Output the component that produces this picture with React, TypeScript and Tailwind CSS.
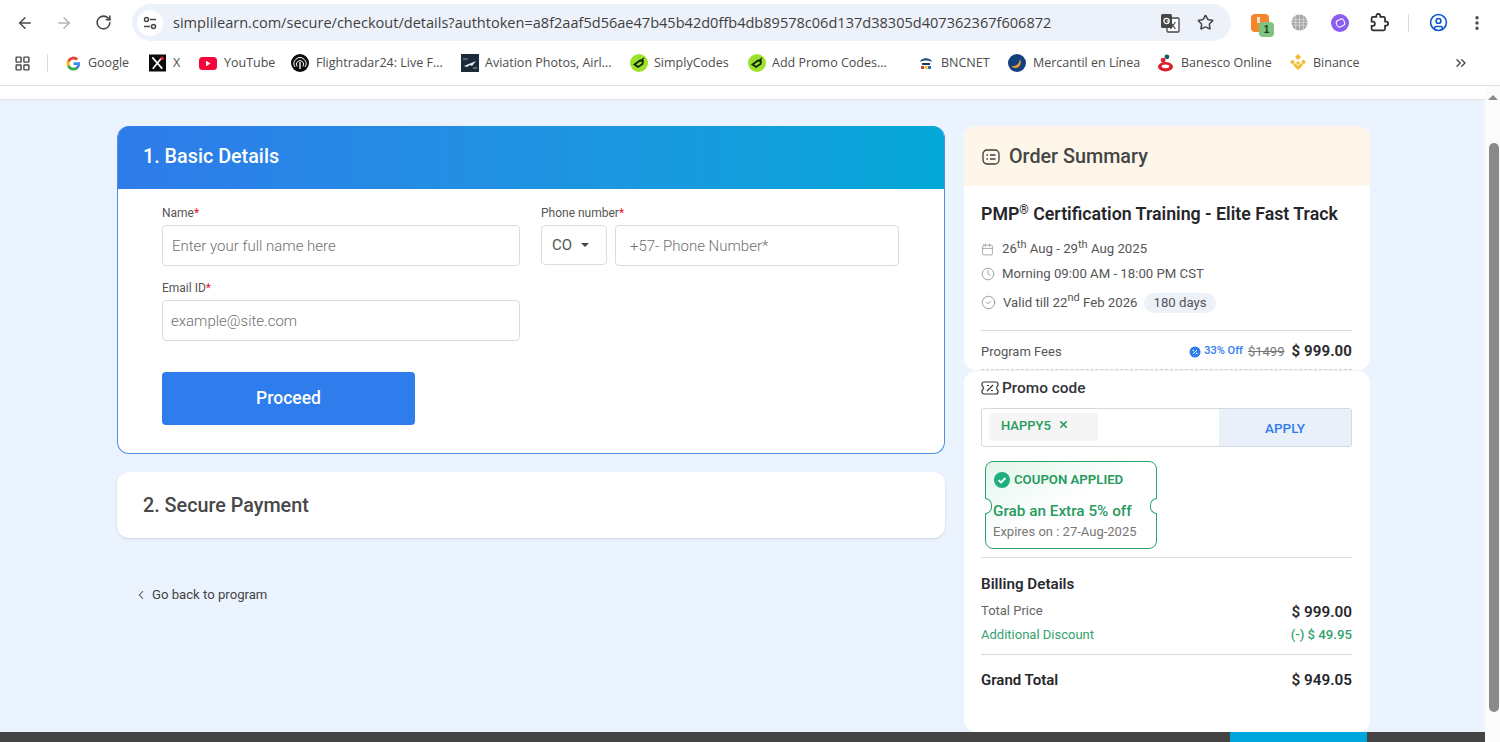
import type { ReactNode } from "react";
import {
  ArrowLeft,
  ArrowRight,
  Calendar,
  ChevronLeft,
  ChevronsRight,
  CircleCheck,
  CircleUser,
  Clock,
  EllipsisVertical,
  LayoutGrid,
  RotateCw,
  Star,
  X,
} from "lucide-react";

function GoogleIcon() {
  return (
    <svg viewBox="0 0 24 24" className="h-[15px] w-[15px]">
      <path fill="#4285F4" d="M22.6 12.2c0-.8-.1-1.500-.2-2.200H12v4.300h5.900a5 5 0 0 1-2.200 3.300v2.700h3.600c2.100-1.900 3.300-4.800 3.300-8.100z" />
      <path fill="#34A853" d="M12 23c3 0 5.500-1 7.300-2.700l-3.600-2.700c-1 .7-2.200 1.100-3.700 1.100-2.900 0-5.300-1.900-6.200-4.500H2.100v2.800A11 11 0 0 0 12 23z" />
      <path fill="#FBBC05" d="M5.800 14.200a6.600 6.600 0 0 1 0-4.300V7.100H2.100a11 11 0 0 0 0 9.900z" />
      <path fill="#EA4335" d="M12 5.400c1.600 0 3.100.6 4.200 1.600l3.200-3.200A11 11 0 0 0 2.100 7.100l3.700 2.800C6.700 7.300 9.100 5.400 12 5.400z" />
    </svg>
  );
}

function XIcon() {
  return (
    <svg viewBox="0 0 18 18" className="h-[18px] w-[17px]">
      <rect width="18" height="18" fill="#0b0b0b" />
      <path d="M3.500 3 14 15M13.500 3.500 4 15" stroke="#fff" strokeWidth="1.800" />
      <circle cx="14" cy="4" r="1.800" fill="#e5202e" />
    </svg>
  );
}

function YouTubeIcon() {
  return (
    <svg viewBox="0 0 18 13" className="h-[13px] w-[18px]">
      <rect width="18" height="13" rx="3.500" fill="#f5063a" />
      <path d="M7 3.800v5.400l4.500-2.700z" fill="#fff" />
    </svg>
  );
}

function RadarIcon() {
  return (
    <svg viewBox="0 0 18 18" className="h-[18px] w-[18px]">
      <circle cx="9" cy="9" r="9" fill="#0c0c0c" />
      <path d="M4 13a6 6 0 1 1 10 0M6.200 12.500a3.600 3.600 0 1 1 5.600 0" fill="none" stroke="#fff" strokeWidth="1" />
      <path d="M9 8v7" stroke="#fff" strokeWidth="1.400" />
    </svg>
  );
}

function AviationIcon() {
  return (
    <svg viewBox="0 0 18 18" className="h-[18px] w-[18px]">
      <rect width="18" height="18" fill="#1d2a3a" />
      <path d="M3 12 15 7l-4 5-2-1-3 2z" fill="#e8edf2" />
      <path d="M2 5h5M12 14h4" stroke="#8fa0b2" strokeWidth="1" />
    </svg>
  );
}

function CodesIcon() {
  return (
    <svg viewBox="0 0 18 18" className="h-[18px] w-[18px]">
      <circle cx="9" cy="9" r="9" fill="#9be22d" />
      <path d="M4.500 10.500 10 6.500l3 .5-.5 3-4.500 3z" fill="none" stroke="#10240a" strokeWidth="1.800" />
      <path d="M11 6.500 14 4" stroke="#10240a" strokeWidth="1.300" />
    </svg>
  );
}

function BncIcon() {
  return (
    <svg viewBox="0 0 14 14" className="h-[14px] w-[14px]">
      <path d="M1 6c1-5 11-5 12 0-3-2-9-2-12 0z" fill="#1d4f7c" />
      <rect x="3" y="7" width="8" height="2" fill="#173a5c" />
      <rect x="2" y="10" width="3" height="3" fill="#d2403a" />
      <rect x="5.500" y="10" width="3" height="3" fill="#e9c548" />
      <rect x="9" y="10" width="3" height="3" fill="#2d6fb5" />
    </svg>
  );
}

function MercantilIcon() {
  return (
    <svg viewBox="0 0 18 18" className="h-[18px] w-[18px]">
      <circle cx="9" cy="9" r="9" fill="#123f7d" />
      <path d="M3 12c4 1 8-1 9-7 2 4 0 9-5 9-2 0-3-1-4-2z" fill="#ef9a2d" />
    </svg>
  );
}

function BanescoIcon() {
  return (
    <svg viewBox="0 0 18 18" className="h-[18px] w-[17px]">
      <ellipse cx="9" cy="13" rx="8" ry="5" fill="#dc1f2e" />
      <ellipse cx="9" cy="12.500" rx="4" ry="2" fill="#fff" />
      <circle cx="6.500" cy="6" r="2.500" fill="#dc1f2e" />
      <circle cx="10.500" cy="2.500" r="2.500" fill="#14575c" />
    </svg>
  );
}

function BinanceIcon() {
  return (
    <svg viewBox="0 0 18 18" className="h-[18px] w-[18px]">
      <path
        fill="#f3ba2f"
        d="M9 0l3 3-3 3-3-3zM3.500 5.500l2.500 2.500-2.500 2.500L1 8zM14.500 5.500L17 8l-2.500 2.500L12 8zM9 7l2 2-2 2-2-2zM9 12l3-3 2 2-5 5-5-5 2-2z"
      />
    </svg>
  );
}

function TranslateIcon() {
  return (
    <svg viewBox="0 0 20 20" className="ml-auto h-[20px] w-[20px]">
      <rect x="7" y="5" width="12" height="14" rx="1" fill="#fff" stroke="#474747" strokeWidth="1.300" />
      <path d="M10.500 9l5 7M15.500 9l-5 7" stroke="#474747" strokeWidth="1.200" />
      <rect x="1" y="1" width="11" height="14" rx="1.500" fill="#474747" />
      <circle cx="6.500" cy="8" r="2.600" fill="none" stroke="#fff" strokeWidth="1.200" />
      <path d="M6.500 8h2.800" stroke="#fff" strokeWidth="1.100" />
    </svg>
  );
}

function GlobeIcon() {
  return (
    <svg viewBox="0 0 18 18" className="ml-[22px] h-[17px] w-[17px]">
      <circle cx="9" cy="9" r="8.500" fill="#a6a6a6" />
      <path d="M1 6h16M1 9h16M1 12h16M5 1.500v15M9 .5v17M13 1.500v15" stroke="#e2e2e2" strokeWidth="0.700" />
    </svg>
  );
}

function PuzzleIcon() {
  return (
    <svg viewBox="0 0 24 24" className="ml-[21px] h-[19px] w-[19px]" fill="none" stroke="#2f2f2f" strokeWidth="2.200" strokeLinejoin="round">
      <path d="M20.500 11H19V7c0-1.100-.9-2-2-2h-4V3.500C13 2.120 11.880 1 10.500 1S8 2.120 8 3.500V5H4c-1.100 0-2 .9-2 2v3.800h1.500c1.490 0 2.700 1.210 2.700 2.700s-1.210 2.700-2.700 2.700H2V20c0 1.100.9 2 2 2h13c1.100 0 2-.9 2-2v-4h1.500c1.380 0 2.500-1.120 2.500-2.500S21.880 11 20.500 11z" />
    </svg>
  );
}

function PromoIcon() {
  return (
    <svg viewBox="0 0 18 16" className="h-[16px] w-[18px]" fill="none" stroke="#333" strokeWidth="1.200">
      <path d="M3 2h12a2 2 0 0 1 2 2v1.500a3 3 0 0 0 0 5V12a2 2 0 0 1-2 2H3a2 2 0 0 1-2-2v-1.500a3 3 0 0 0 0-5V4a2 2 0 0 1 2-2z" />
      <path d="M6 11l6-6M6 5.500h2M10 10.500h2" />
    </svg>
  );
}

const bookmarks: { label: string; width: string; icon: ReactNode; gap: string }[] = [
  { label: "Google", width: "w-[83px]", icon: <GoogleIcon />, gap: "gap-[7px]" },
  { label: "X", width: "w-[50px]", icon: <XIcon />, gap: "gap-[7px]" },
  { label: "YouTube", width: "w-[92px]", icon: <YouTubeIcon />, gap: "gap-[7px]" },
  { label: "Flightradar24: Live F...", width: "w-[170px]", icon: <RadarIcon />, gap: "gap-[7px]" },
  { label: "Aviation Photos, Airl...", width: "w-[169px]", icon: <AviationIcon />, gap: "gap-[6px]" },
  { label: "SimplyCodes", width: "w-[118px]", icon: <CodesIcon />, gap: "gap-[6px]" },
  { label: "Add Promo Codes...", width: "w-[171px]", icon: <CodesIcon />, gap: "gap-[6px]" },
  { label: "BNCNET", width: "w-[89px]", icon: <BncIcon />, gap: "gap-[8px]" },
  { label: "Mercantil en Línea", width: "w-[149px]", icon: <MercantilIcon />, gap: "gap-[7px]" },
  { label: "Banesco Online", width: "w-[132px]", icon: <BanescoIcon />, gap: "gap-[7px]" },
  { label: "Binance", width: "w-[85px]", icon: <BinanceIcon />, gap: "gap-[6px]" },
];

function Toolbar() {
  return (
    <div className="flex h-[45px] items-center bg-white text-[#474747]">
      <ArrowLeft className="ml-[16px] h-[18px] w-[18px]" strokeWidth={2} />
      <ArrowRight className="ml-[21px] h-[18px] w-[18px] text-[#b4b4b4]" strokeWidth={2} />
      <RotateCw className="ml-[22px] h-[17px] w-[17px]" strokeWidth={2.2} />
      <div className="ml-[20px] flex h-[37px] w-[1099px] items-center rounded-full bg-[#edf2fa] pl-[5px]">
        <div className="flex h-[26px] w-[26px] items-center justify-center rounded-full bg-white">
          <svg viewBox="0 0 16 16" className="h-[16px] w-[16px]" fill="none" stroke="#474747" strokeWidth="1.500">
            <circle cx="4.500" cy="4.500" r="2" />
            <path d="M8 4.500h6M2 11.500h6" />
            <circle cx="11.500" cy="11.500" r="2" />
          </svg>
        </div>
        <span className="ml-[10px] font-['Open_Sans',sans-serif] text-[14.560px] text-[#3f3f3f]">
          simplilearn.com/secure/checkout/details?authtoken=a8f2aaf5d56ae47b45b42d0ffb4db89578c06d137d38305d407362367f606872
        </span>
        <TranslateIcon />
        <Star className="ml-[17px] mr-[17px] h-[17px] w-[17px]" strokeWidth={2.2} />
      </div>
      <div className="relative ml-[20px] flex h-[18px] w-[18px] items-center justify-center rounded-[4px] bg-[#f5862c]">
        <span className="mb-[5px] mr-[3px] h-[6px] w-[3px] bg-[#fde3c8]" />
        <span className="absolute left-[8px] top-[8px] flex h-[15px] w-[15px] items-center justify-center rounded-[4px] bg-[#7cc47f] font-['Liberation_Sans',sans-serif] text-[10px] font-bold text-[#1d3b20]">
          1
        </span>
      </div>
      <GlobeIcon />
      <div className="ml-[23px] flex h-[18px] w-[18px] items-center justify-center rounded-full bg-[#8b5cf0]">
        <span className="h-[8px] w-[9px] rotate-[-25deg] rounded-[3px] border border-white" />
      </div>
      <PuzzleIcon />
      <div className="ml-[19px] h-[18px] w-[1px] bg-[#cfdcf0]" />
      <CircleUser className="ml-[20px] h-[19px] w-[19px] text-[#0b57d0]" strokeWidth={2} />
      <EllipsisVertical className="ml-[20px] h-[18px] w-[18px]" strokeWidth={2.5} />
    </div>
  );
}

function BookmarksBar() {
  return (
    <div className="flex h-[41px] items-center border-b border-[#e2e2e2] bg-white pb-[4px] font-['Open_Sans',sans-serif] text-[12.500px] text-[#4c4c4c]">
      <LayoutGrid className="ml-[14px] h-[17px] w-[17px] text-[#474747]" strokeWidth={2} />
      <div className="ml-[16px] mr-[18px] h-[18px] w-[1px] bg-[#cfdcf0]" />
      {bookmarks.map((b) => (
        <div key={b.label} className={`flex shrink-0 items-center ${b.width} ${b.gap}`}>
          {b.icon}
          <span className="whitespace-nowrap">{b.label}</span>
        </div>
      ))}
      <ChevronsRight className="ml-[79px] h-[16px] w-[16px] text-[#474747]" strokeWidth={2} />
    </div>
  );
}

function Field({ label, children, className }: { label: string; children: ReactNode; className: string }) {
  return (
    <div className={className}>
      <label className="block text-[12px] leading-[14px] text-[#555] [font-weight:450]">
        {label}
        <span className="text-[#e5172f]">*</span>
      </label>
      <div className="mt-[5px] flex gap-[8px]">{children}</div>
    </div>
  );
}

const inputClass =
  "h-[41px] rounded-[4px] border border-[#dcdcdc] bg-white text-[15px] font-light text-[#333] outline-none placeholder:text-[#707070]";

function BasicDetails() {
  return (
    <section className="h-[328px] overflow-hidden rounded-xl border border-t-0 border-[#4f8fe0] bg-white">
      <h2 className="flex h-[63px] items-center bg-gradient-to-r from-[#2e7bea] to-[#03a8d8] pb-[1px] pl-[25px] text-[19.750px] font-medium text-white">
        1. Basic Details
      </h2>
      <div className="pl-[44px] pt-[17px]">
        <div className="flex gap-[21px]">
          <Field label="Name" className="w-[358px]">
            <input placeholder="Enter your full name here" className={`${inputClass} w-[358px] pl-[9px]`} />
          </Field>
          <Field label="Phone number" className="w-[358px]">
            <div className="flex h-[40px] w-[66px] items-center rounded-[4px] border border-[#dcdcdc] pl-[10px] text-[15px] text-[#555]">
              CO
              <span className="ml-[9px] h-0 w-0 border-x-[4px] border-t-[4px] border-x-transparent border-t-[#444]" />
            </div>
            <input placeholder="+57- Phone Number*" className={`${inputClass} w-[284px] pl-[14px]`} />
          </Field>
        </div>
        <Field label="Email ID" className="mt-[15px] w-[358px]">
          <input placeholder="example@site.com" className={`${inputClass} w-[358px] pl-[8px]`} />
        </Field>
        <button className="mt-[31px] h-[53px] w-[253px] rounded-[4px] bg-[#2f7cec] text-[17.500px] font-medium text-white">
          Proceed
        </button>
      </div>
    </section>
  );
}

function OrderSummary() {
  return (
    <aside className="flex w-[406px] flex-col gap-[1px]">
      <div className="h-[244px] overflow-hidden rounded-xl bg-white">
        <div className="flex h-[60px] items-center gap-[9px] bg-[#fdf6e9] pt-[1px] pl-[18px] text-[19.750px] font-medium text-[#454545]">
          <svg viewBox="0 0 18 16" className="h-[16px] w-[18px]" fill="none" stroke="#3c3c3c" strokeWidth="1.300">
            <rect x="1" y="1" width="16" height="14" rx="4" />
            <path d="M4.500 6H6M8 6h5.500M4.500 10H6M8 10h5.500" />
          </svg>
          Order Summary
        </div>
        <div className="pl-[17px] pr-[18px]">
          <h3 className="mt-[15px] text-[17.750px] font-semibold leading-[26px] text-[#26262b]">
            PMP
            <sup className="text-[12px] font-normal">®</sup> Certification Training - Elite Fast Track
          </h3>
          <div className="mt-[10px] flex h-[24px] items-center gap-[8px] text-[13.200px] text-[#555]">
            <Calendar className="h-[13px] w-[13px] text-[#999]" strokeWidth={1.500} />
            <span>
              26<sup className="text-[11px]">th</sup> Aug - 29<sup className="text-[11px]">th</sup> Aug 2025
            </span>
          </div>
          <div className="flex h-[25px] items-center gap-[7px] text-[13.200px] text-[#555]">
            <Clock className="h-[14px] w-[14px] text-[#999]" strokeWidth={1.500} />
            <span>Morning 09:00 AM - 18:00 PM CST</span>
          </div>
          <div className="mt-[2px] flex h-[29px] items-center gap-[7px] text-[13.200px] text-[#555]">
            <CircleCheck className="h-[15px] w-[15px] text-[#999]" strokeWidth={1.500} />
            <span>
              Valid till 22<sup className="text-[11px]">nd</sup> Feb 2026
            </span>
            <span className="flex h-[20px] items-center rounded-full bg-[#edf1f8] px-[9px]">180 days</span>
          </div>
          <div className="mt-[13px] flex h-[39px] items-center justify-between border-t border-[#d9d9d9] pt-[3px] text-[13px] text-[#555]">
            <span>Program Fees</span>
            <span className="flex items-center">
              <svg viewBox="0 0 12 12" className="h-[12px] w-[12px]">
                <circle cx="6" cy="6" r="5.500" fill="#2f7cec" />
                <path d="M4 8l4-4" stroke="#fff" strokeWidth="1" />
                <circle cx="4.300" cy="4.500" r="0.800" fill="#fff" />
                <circle cx="7.700" cy="7.500" r="0.800" fill="#fff" />
              </svg>
              <span className="ml-[3px] text-[11px] font-medium text-[#2f7cec]">33% Off</span>
              <span className="ml-[5px] text-[13px] text-[#777] line-through">$1499</span>
              <span className="ml-[7px] text-[15px] font-bold tracking-[0.1px] text-[#2c2c30]">$ 999.00</span>
            </span>
          </div>
          <div className="border-t border-dashed border-[#cfcfcf]" />
        </div>
      </div>
      <div className="flex-1 rounded-xl bg-white pl-[17px] pr-[18px] pt-[8px]">
        <div className="flex items-center gap-[3px] text-[15.400px] font-medium leading-[18px] text-[#33333a]">
          <PromoIcon />
          Promo code
        </div>
        <div className="mt-[11px] flex h-[39px] overflow-hidden rounded-[3px] border border-[#d5d9e0]">
          <div className="flex-1 pl-[7px] pt-[4px]">
            <div className="flex h-[28px] w-[109px] items-start gap-[7px] rounded-[2px] bg-[#f5f5f5] pl-[12px] pt-[3px] text-[13px] font-medium text-[#279a5e]">
              HAPPY5
              <X className="mt-[3px] h-[11px] w-[11px]" strokeWidth={3.500} />
            </div>
          </div>
          <div className="flex w-[132px] items-center justify-center bg-[#eaf0f9] pt-[1px] text-[13.500px] font-medium text-[#2f7cec]">
            APPLY
          </div>
        </div>
        <div className="relative ml-[4px] mt-[14px] h-[88px] w-[172px] rounded-lg border border-[#2da36b] bg-gradient-to-br from-[#e3f6ec] via-white to-white pl-[7px] pt-[9px]">
          <span className="absolute left-[-1px] top-[36px] h-[16px] w-[7px] rounded-r-full border-y border-r border-[#2da36b] bg-white" />
          <span className="absolute right-[-1px] top-[36px] h-[16px] w-[7px] rounded-l-full border-y border-l border-[#2da36b] bg-white" />
          <div className="flex items-center gap-[4px] text-[13.200px] font-semibold leading-[18px] text-[#279a5e]">
            <svg viewBox="0 0 16 16" className="ml-[1px] h-[16px] w-[16px]">
              <circle cx="8" cy="8" r="8" fill="#1fae7d" />
              <path d="M4.500 8.200 7 10.500l4.500-4.500" fill="none" stroke="#fff" strokeWidth="1.800" />
            </svg>
            COUPON APPLIED
          </div>
          <div className="mt-[13px] text-[15.300px] font-medium leading-[18px] text-[#279a5e]">Grab an Extra 5% off</div>
          <div className="mt-[4px] text-[13px] leading-[16px] text-[#777]">Expires on : 27-Aug-2025</div>
        </div>
        <div className="mt-[8px] border-t border-[#dedede] pt-[17px]">
          <div className="text-[15.200px] font-semibold leading-[18px] text-[#2a2a30]">Billing Details</div>
          <div className="mt-[10px] flex items-start justify-between text-[13px] leading-[16px] text-[#666]">
            Total Price
            <span className="mt-[1px] text-[15.300px] font-semibold text-[#2a2a30]">$ 999.00</span>
          </div>
          <div className="mt-[7px] flex items-center justify-between text-[13px] leading-[16px] text-[#35a26d]">
            Additional Discount
            <span className="text-[13.200px] font-medium">(-) $ 49.95</span>
          </div>
          <div className="mt-[11px] flex h-[51px] items-center justify-between border-t border-[#d9d9d9] text-[15px] font-semibold text-[#26262b]">
            Grand Total
            <span className="text-[15.300px]">$ 949.05</span>
          </div>
        </div>
      </div>
    </aside>
  );
}

export default function App() {
  return (
    <div className="flex h-[742px] w-[1500px] flex-col overflow-hidden bg-white font-['Roboto',sans-serif]">
      <Toolbar />
      <BookmarksBar />
      <div className="flex min-h-0 flex-1">
        <main className="flex w-[1485px] flex-col">
          <div className="h-[14px] shrink-0 border-b border-[#e2e2e2] bg-white" />
          <div className="flex min-h-0 flex-1 gap-[19px] bg-[#ebf3fe] pl-[117px] pt-[26px]">
            <div className="w-[828px]">
              <BasicDetails />
              <div className="mt-[18px] flex h-[66px] items-center rounded-xl bg-white pl-[26px] pt-[1px] text-[19.750px] font-medium text-[#484848] shadow-sm">
                2. Secure Payment
              </div>
              <a className="ml-[17px] mt-[47px] flex items-center gap-[4px] text-[13.150px] text-[#444]">
                <ChevronLeft className="h-[14px] w-[14px]" strokeWidth={1.800} />
                Go back to program
              </a>
            </div>
            <OrderSummary />
          </div>
          <div className="h-[10px] shrink-0 bg-[#444444] pl-[1230px]">
            <div className="h-full w-[137px] bg-[#00a5dc]" />
          </div>
        </main>
        <div className="flex w-[15px] flex-col items-center bg-[#fbfbfb]">
          <span className="mt-[9px] h-0 w-0 border-x-[5px] border-b-[5px] border-x-transparent border-b-[#8c8c8c]" />
          <div className="ml-[2px] mt-[43px] h-[569px] w-[10px] rounded-full bg-[#8a8a8a]" />
        </div>
      </div>
    </div>
  );
}
